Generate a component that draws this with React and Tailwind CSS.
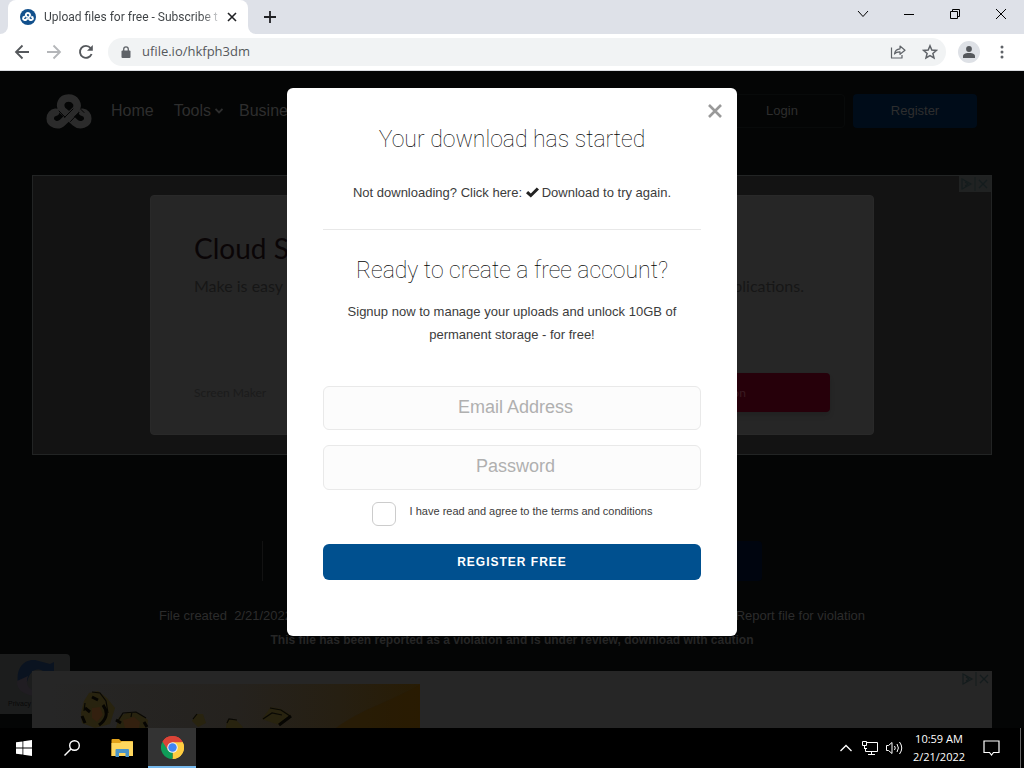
import React from "react";

const stroke = { fill: "none", strokeLinecap: "round", strokeLinejoin: "round" };

function CloudLogo({ className, gap }) {
  return (
    <svg viewBox="0 0 46 36" className={className} aria-hidden="true" {...stroke}>
      <g stroke="currentColor" strokeWidth="7.5">
        <path d="M22 21 L16.500 16.500 C12.500 11 15.500 4 22.500 4 C29.500 4 33.500 11 29.500 16 L16.500 28.500 C12 33 4.200 30 4.200 24.500 C4.200 21 6.500 18.600 9.500 18.200" />
        <path d="M22 22 L29 28.500 C34 33 41.800 30 41.800 24.500 C41.800 21 39.500 18.600 36.500 18.200" />
      </g>
      <g stroke={gap} strokeWidth="1">
        <path d="M18.500 23.500 L27 15 M24.500 27.500 L33 18.500 M13 17 L19 23 M35 15.500 L38 18.500" />
      </g>
    </svg>
  );
}

function AdMarks({ className }) {
  return (
    <svg viewBox="0 0 32 16" className={className} aria-hidden="true" fill="none" stroke="#141c1d" strokeWidth="1.200">
      <path d="M3 3 L12 8 L3 13 Z M6 6 L9 8 L6 10" />
      <path d="M16 1 V15" strokeWidth="1" />
      <path d="M20 4 L28 12 M28 4 L20 12" />
    </svg>
  );
}

function TabBar() {
  return (
    <div className="flex h-[34px] shrink-0 bg-[#dee1e8]">
      <div className="w-2 bg-white"><div className="h-full rounded-br-lg bg-[#dee1e8]" /></div>
      <div className="flex w-[240px] items-center rounded-t-lg bg-white pl-3 pr-[6px]">
        <span className="flex size-4 shrink-0 items-center justify-center rounded-full bg-[#12508c] text-white">
          <CloudLogo className="w-3" gap="#12508c" />
        </span>
        <span className="ml-2 flex-1 whitespace-nowrap bg-linear-to-r from-[#3c4043] from-90% to-[#d5d6d8] bg-clip-text font-['Roboto',sans-serif] text-[12px] text-transparent">
          Upload files for free - Subscribe t
        </span>
        <button aria-label="Close tab" className="ml-1 flex size-5 shrink-0 items-center justify-center">
          <svg viewBox="0 0 10 10" className="size-[10px]" stroke="#202124" strokeWidth="1.600"><path d="M1 1 L9 9 M9 1 L1 9" /></svg>
        </button>
      </div>
      <div className="w-2 bg-white"><div className="h-full rounded-bl-lg bg-[#dee1e8]" /></div>
      <button aria-label="New tab" className="flex w-7 items-center justify-center">
        <svg viewBox="0 0 12 12" className="size-3" stroke="#202124" strokeWidth="1.800"><path d="M6 0 V12 M0 6 H12" /></svg>
      </button>
      <div className="ml-auto flex h-7 text-black">
        <button aria-label="Search tabs" className="flex w-[46px] items-center justify-center">
          <svg viewBox="0 0 12 12" className="size-3" fill="none" stroke="currentColor"><path d="M1 3 L6 8.500 L11 3" /></svg>
        </button>
        <button aria-label="Minimize" className="flex w-[46px] items-center justify-center">
          <svg viewBox="0 0 10 10" className="size-[10px]" stroke="currentColor"><path d="M0 5.500 H10" /></svg>
        </button>
        <button aria-label="Restore" className="flex w-[46px] items-center justify-center">
          <svg viewBox="0 0 10 10" className="size-[10px]" fill="none" stroke="currentColor"><path d="M.5 2.500 H7.500 V9.500 H.5 Z M2.500 2.500 V.5 H9.500 V7.500 H7.500" /></svg>
        </button>
        <button aria-label="Close" className="flex w-[46px] items-center justify-center">
          <svg viewBox="0 0 12 12" className="size-3" stroke="currentColor"><path d="M1 1 L11 11 M11 1 L1 11" /></svg>
        </button>
      </div>
    </div>
  );
}

function Toolbar() {
  return (
    <div className="flex h-[37px] shrink-0 items-center border-b border-[#dadce0] bg-white pl-[14px] pr-3 text-[#5f6368]">
      <div className="flex gap-4">
        <button aria-label="Back"><svg viewBox="0 0 16 16" className="size-4" fill="none" stroke="#55585c" strokeWidth="1.800"><path d="M15 8 H2 M8.500 1.500 L2 8 L8.500 14.500" /></svg></button>
        <button aria-label="Forward"><svg viewBox="0 0 16 16" className="size-4" fill="none" stroke="#b4b6b9" strokeWidth="1.800"><path d="M1 8 H14 M7.500 1.500 L14 8 L7.500 14.500" /></svg></button>
        <button aria-label="Reload"><svg viewBox="0 0 16 16" className="size-4" fill="none" stroke="#55585c" strokeWidth="1.900"><path d="M13.600 10 A6 6 0 1 1 12.600 4" /><path d="M14.800 1 V6.800 H9 Z" fill="#55585c" stroke="none" /></svg></button>
      </div>
      <div className="ml-[14px] flex h-7 flex-1 items-center rounded-full bg-[#f1f3f4] pl-[13px] pr-2">
        <svg viewBox="0 0 10 12" className="h-3 w-[10px]" aria-hidden="true"><rect x=".5" y="4.500" width="9" height="7.500" rx="1" fill="#5f6368" /><path d="M2.700 5 V3.200 a2.300 2.300 0 0 1 4.600 0 V5" fill="none" stroke="#5f6368" strokeWidth="1.300" /></svg>
        <input aria-label="Address" type="text" defaultValue="ufile.io/hkfph3dm" className="ml-[11px] min-w-0 flex-1 bg-transparent text-[13px] text-[#55585c] outline-none" />
        <button aria-label="Share" className="mr-4"><svg viewBox="0 0 16 16" className="size-4" fill="none" stroke="currentColor" strokeWidth="1.200" strokeLinejoin="round"><path d="M1.500 3.500 V14 H12 V11" /><path d="M4.500 10 C5 6.500 7 5 10 4.800 V2 L15 6.300 L10 10.300 V7.800 C7.500 7.700 5.800 8.300 4.500 10 Z" /></svg></button>
        <button aria-label="Bookmark"><svg viewBox="0 0 16 16" className="size-4" fill="none" stroke="currentColor" strokeWidth="1.500"><path d="M8 1.800 L9.800 6 L14.400 6.400 L10.900 9.400 L12 13.900 L8 11.500 L4 13.900 L5.100 9.400 L1.600 6.400 L6.200 6 Z" /></svg></button>
      </div>
      <button aria-label="Profile" className="ml-3 flex size-[22px] items-center justify-center rounded-full bg-[#dee1e6]">
        <svg viewBox="0 0 12 12" className="size-3" fill="#55585c"><circle cx="6" cy="3" r="2.900" /><path d="M0 12 V10 C0 7.500 4 7 6 7 S12 7.500 12 10 V12 Z" /></svg>
      </button>
      <button aria-label="Menu" className="ml-3 flex w-5 justify-center"><svg viewBox="0 0 4 14" className="h-[14px] w-1" fill="currentColor"><circle cx="2" cy="2" r="1.500" /><circle cx="2" cy="7" r="1.500" /><circle cx="2" cy="12" r="1.500" /></svg></button>
    </div>
  );
}

function Header() {
  return (
    <header className="flex h-[104px] items-start pl-[46px] pr-[47px] pt-[23px] text-[#2e2e2e]">
      <CloudLogo className="h-9 w-[46px] text-[#2b2b2b]" gap="#050505" />
      <nav className="ml-[19px] flex gap-5 pt-[5px] text-base leading-6">
        <a href="#home">Home</a>
        <a href="#tools" className="flex items-center gap-1">Tools<svg viewBox="0 0 8 8" className="size-2" fill="none" stroke="currentColor" strokeWidth="1.800"><path d="M.5 2 L4 5.500 L7.500 2" /></svg></a>
        <a href="#business" className="-ml-1">Business</a>
      </nav>
      <div className="ml-auto flex gap-2 text-[13px]">
        <button className="h-[34px] w-[126px] rounded border border-[#080a0a]">Login</button>
        <button className="h-[34px] w-[124px] rounded bg-[#000c19]">Register</button>
      </div>
    </header>
  );
}

function CloudAd() {
  return (
    <section className="relative mx-8 h-[280px] border border-[#222424] bg-[#131313] px-[117px] pt-[19px]">
      <AdMarks className="absolute right-0 top-0 h-4 w-8 bg-[#202222]" />
      <div className="flex h-[240px] flex-col rounded border border-[#292929] bg-[#262626] px-[43px] pt-8 font-['Lato',sans-serif]">
        <h2 className="text-[28px] leading-10 text-[#0a0506]">Cloud Storage</h2>
        <p className="flex justify-between pr-[26px] text-[16px] leading-9 text-[#161616]"><span>Make is easy</span><span>for all applications.</span></p>
        <div className="mt-auto flex items-center justify-between pb-[22px]">
          <span className="text-[12px] text-[#1b1b1b]">Screen Maker</span>
          <button className="h-[39px] w-[260px] rounded bg-[#26000a] text-[12px] text-[#3a1c22] shadow-md">Open Application</button>
        </div>
      </div>
    </section>
  );
}

function BannerAd() {
  return (
    <section className="relative mx-8 h-[57px] overflow-hidden bg-[#262626]">
      <svg viewBox="0 0 388 57" className="h-[57px] w-[388px]" aria-hidden="true">
        <defs>
          <linearGradient id="gold"><stop offset="0" stopColor="#262626" /><stop offset=".5" stopColor="#25221e" /><stop offset=".78" stopColor="#261f12" /><stop offset="1" stopColor="#281c04" /></linearGradient>
        </defs>
        <rect x="18" y="13" width="370" height="44" fill="url(#gold)" />
        <path d="M304 57 C330 38 350 34 388 14 V57 Z" fill="#2a1b00" opacity=".6" />
        <g fill="#28230f">
          <path d="M52 30 L57 22 L66 20 L75 27 L83 37 L78 53 L63 57 L50 52 L49 42 Z" />
          <path d="M84 57 L87 46 L96 41 L107 42 L116 49 L115 57 Z" />
          <path d="M160 50 L164 43 L171 43 L174 52 L166 56 Z" />
          <path d="M194 57 L195 49 L203 48 L210 55 L211 57 Z" />
          <path d="M230 48 L239 36 L249 38 L259 44 L247 54 Z" />
        </g>
        <g fill="#33200f">
          <path d="M60 37 L68 36 L71 44 L65 51 L60 47 Z" />
          <path d="M91 49 L102 46 L108 51 L107 57 L93 57 Z" />
        </g>
        <g fill="none" stroke="#090804" strokeWidth="1.200">
          <path d="M60 21 L68 22 L74 30 L76 42 M53 32 L52 40 M86 50 L91 42 L104 41 L114 47 M100 41 L99 46 M195 52 L197 48 L205 49 M161 48 L165 43 M238 37 L249 39 L258 45 M231 48 L240 42 L250 44" />
        </g>
        <g fill="none" stroke="#060502" strokeWidth="3">
          <path d="M60 26 L66 29 M53 37 L58 41 M50 45 L53 52 M71 34 C77 42 74 49 67 54 M84 49 L89 52 M112 51 L115 56 M247 54 L259 45" />
        </g>
      </svg>
      <AdMarks className="absolute right-0 top-0 h-4 w-8" />
    </section>
  );
}

function Page() {
  return (
    <div className="h-full overflow-hidden bg-[#040505] text-[#2c2c2c]">
      <Header />
      <CloudAd />
      <div className="mx-auto mt-[86px] flex h-10 w-[500px] justify-end border-l border-[#121212]"><span className="w-[120px] rounded bg-[#00050f]" /></div>
      <div className="mt-[23px] px-[159px] text-[13px] leading-6">
        <p className="flex justify-between"><span>File created&nbsp; 2/21/2022</span><a href="#report">Report file for violation</a></p>
        <p className="whitespace-nowrap text-center text-[12px] font-bold text-[#262626]">This file has been reported as a violation and is under review, download with caution</p>
      </div>
      <div className="relative mt-[19px]">
        <div className="absolute -top-[17px] left-0 h-[60px] w-[70px] rounded-r-sm bg-[#1c1d1d]">
          <svg viewBox="0 0 70 60" className="h-full w-full" aria-hidden="true">
            <path d="M18 28 C16 14 24 5 35 6 L50 10 L54 8 V18 L43 17 C34 12 29 20 27 28 Z" fill="#0a1320" />
            <path d="M17 27 L28 22 C25 30 29 35 33 36 V42 C24 40 16 36 17 27 Z" fill="#201d22" />
          </svg>
          <span className="absolute bottom-1 left-2 text-[7px] leading-3 text-[#090909]">Privacy - Terms</span>
        </div>
        <BannerAd />
      </div>
    </div>
  );
}

function Modal() {
  const field = "block w-full rounded-md border border-[#e9e9e9] bg-[#fcfcfc] pl-[7px] pb-[2px] text-center text-lg text-[#555] outline-none placeholder:text-[#b0b0b0]";
  return (
    <div className="absolute inset-0 flex items-start justify-center pt-[17px]">
      <div role="dialog" aria-modal="true" aria-labelledby="started" className="relative w-[450px] rounded-md bg-white px-9 pb-14 pt-9 text-center text-[#3c3c3c]">
        <button aria-label="Close dialog" className="absolute right-[15px] top-4 size-[14px]">
          <svg viewBox="0 0 14 14" className="size-[14px]" stroke="#999" strokeWidth="2.600"><path d="M1 1 L13 13 M13 1 L1 13" /></svg>
        </button>
        <h1 id="started" className="font-['Roboto',sans-serif] text-[23px] font-thin leading-8 text-black">Your download has started</h1>
        <p className="mt-[25px] text-[13px] leading-6">
          Not downloading? Click here:{" "}
          <a href="#download"><svg viewBox="0 0 14 11" className="mr-[3px] inline h-[11px] w-[13px] align-[-1px]" fill="#222"><path d="M0 6.200 L2.300 3.900 L5.200 6.600 L11.600 0 L14 2.200 L5.200 11 Z" /></svg>Download</a> to try again.
        </p>
        <hr className="mt-6 border-[#e8e8e8]" />
        <h2 className="mt-[25px] font-['Roboto',sans-serif] text-[23px] font-thin leading-8 text-black">Ready to create a free account?</h2>
        <p className="mx-5 mt-[13px] text-[13px] leading-[23px]">Signup now to manage your uploads and unlock 10GB of permanent storage - for free!</p>
        <form className="mt-10" onSubmit={(e) => e.preventDefault()}>
          <input type="email" aria-label="Email Address" placeholder="Email Address" className={field + " h-11"} />
          <input type="password" aria-label="Password" placeholder="Password" className={field + " mt-[15px] h-[45px]"} />
          <label className="mt-3 flex h-6 justify-center gap-[14px] text-[11px] leading-[19px]">
            <input type="checkbox" className="size-6 appearance-none rounded-md border border-[#ccc] bg-white" />
            I have read and agree to the terms and conditions
          </label>
          <button type="submit" className="mt-[18px] h-9 w-full rounded-md bg-[#00508f] text-[12px] font-bold tracking-[1px] text-white">REGISTER FREE</button>
        </form>
      </div>
    </div>
  );
}

function Taskbar() {
  return (
    <footer className="flex h-10 shrink-0 items-stretch bg-black font-['Open_Sans',sans-serif] text-white">
      <button aria-label="Start" className="flex w-12 items-center justify-center"><svg viewBox="0 0 16 16" className="size-4" fill="#fff"><path d="M0 2.300 L6.500 1.400 V7.600 H0 Z M7.300 1.300 L16 0 V7.600 H7.300 Z M0 8.400 H6.500 V14.600 L0 13.700 Z M7.300 8.400 H16 V16 L7.300 14.700 Z" /></svg></button>
      <button aria-label="Search" className="flex w-12 items-center justify-center"><svg viewBox="0 0 16 16" className="size-4" fill="none" stroke="#fff" strokeWidth="1.400"><circle cx="10.500" cy="5.500" r="4.800" /><path d="M7 9 L.5 15.500" /></svg></button>
      <button aria-label="File Explorer" className="flex w-[52px] items-center justify-center"><svg viewBox="0 0 22 18" className="h-[18px] w-[22px]"><path d="M.5 1 Q.5 0 1.500 0 H8 L10 2 H21 Q22 2 22 3 V17 H.5 Z" fill="#e3a21a" /><path d="M.5 4 L9 4 L11 2.500 H22 V17 H.5 Z" fill="#ffd75e" /><path d="M4.500 18 V11 Q4.500 10 5.500 10 H17 Q18 10 18 11 V18 H14.500 V14 H8 V18 Z" fill="#4a94c8" /></svg></button>
      <button aria-label="Google Chrome" className="flex w-12 items-center justify-center border-b-2 border-[#76b9ed] bg-[#333]">
        <svg viewBox="0 0 48 48" className="size-[23px]">
          <path d="M24 24 L3.200 12 A24 24 0 0 1 44.800 12 Z" fill="#db4437" />
          <path d="M24 24 L44.800 12 A24 24 0 0 1 24 48 Z" fill="#ffcd40" />
          <path d="M24 24 L24 48 A24 24 0 0 1 3.200 12 Z" fill="#0f9d58" />
          <path d="M24 13 H45.300 L44.800 12 A24 24 0 0 0 3.200 12 L14.500 29.500 Z" fill="#db4437" />
          <path d="M33.500 29.500 L24 48 A24 24 0 0 0 45.300 13 H24 Z" fill="#ffcd40" />
          <circle cx="24" cy="24" r="11" fill="#f1f1f1" /><circle cx="24" cy="24" r="8.800" fill="#4285f4" />
        </svg>
      </button>
      <div className="ml-auto flex items-center">
        <button aria-label="Show hidden icons"><svg viewBox="0 0 12 8" className="h-2 w-3" fill="none" stroke="#fff" strokeWidth="1.300"><path d="M.5 7 L6 1.500 L11.500 7" /></svg></button>
        <button aria-label="Network" className="ml-[10px]"><svg viewBox="0 0 16 14" className="h-[14px] w-4" fill="none" stroke="#fff"><path d="M5 1.500 H15.500 V10.500 H3.500 V7 M9.500 10.500 V13 M6 13.500 H13 M.5 .5 H4.500 V4.500 H.5 Z M2.500 4.500 V7 M2 7.500 H5" /></svg></button>
        <button aria-label="Volume" className="ml-2"><svg viewBox="0 0 17 14" className="h-[14px] w-[17px]" fill="none" stroke="#fff"><path d="M.5 4.500 H2.500 L6 1.500 V12.500 L2.500 9.500 H.5 Z M8.500 5 Q10 7 8.500 9 M11 3 Q13.800 7 11 11 M13.500 1 Q18 7 13.500 13" /></svg></button>
        <div className="ml-2 w-14 whitespace-nowrap text-center text-[11px] leading-[18px]"><div>10:59 AM</div><div>2/21/2022</div></div>
        <button aria-label="Notifications" className="ml-4"><svg viewBox="0 0 17 16" className="h-4 w-[17px]" fill="none" stroke="#fff" strokeWidth="1.200"><path d="M1 1 H16 V12.500 H10.500 L8.500 15 L6.500 12.500 H1 Z" /></svg></button>
        <div className="ml-5 mr-[3px] h-full w-px bg-[#666]" />
      </div>
    </footer>
  );
}

export default function App() {
  return (
    <div className="flex h-screen flex-col overflow-hidden bg-black font-['Liberation_Sans',Arial,sans-serif]">
      <div className="shrink-0 font-['Open_Sans',sans-serif]">
        <TabBar />
        <Toolbar />
      </div>
      <main className="relative min-h-0 flex-1">
        <Page />
        <Modal />
      </main>
      <Taskbar />
    </div>
  );
}
